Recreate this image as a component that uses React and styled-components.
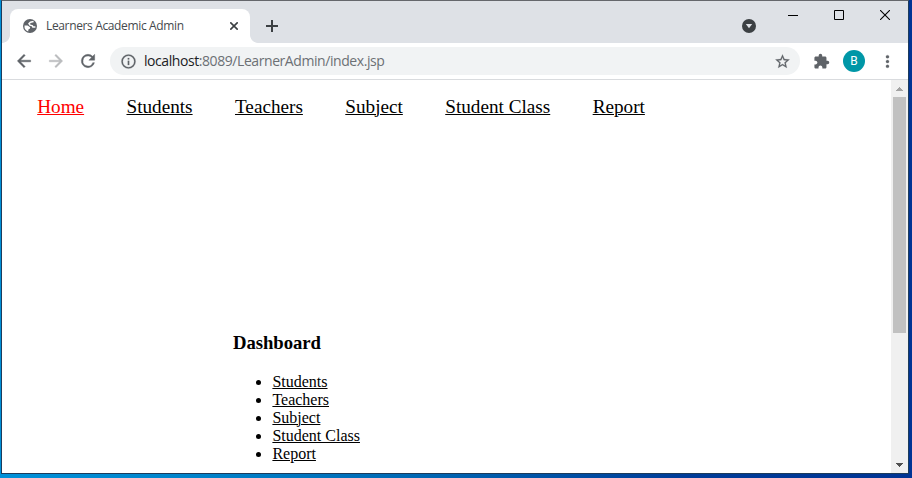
import React from "react";
import styled, { createGlobalStyle } from "styled-components";

const GlobalStyle = createGlobalStyle`
  *, *::before, *::after { box-sizing: border-box; }
  body { margin: 0; overflow: hidden; }
`;

const Desktop = styled.div`
  width: 912px;
  height: 478px;
  padding: 0 3px 4px 1px;
  background: linear-gradient(90deg, #0090d8 0%, #0084cc 20%, #0068b4 45%, #003c98 75%, #003494 100%);
`;

const Window = styled.div`
  height: 474px;
  display: flex;
  flex-direction: column;
  background: #fff;
  border: 1px solid #1d3c5c;
  border-top-color: #65676c;
`;

const TitleBar = styled.header`
  height: 42px;
  flex: none;
  display: flex;
  padding-left: 8px;
  background: #dee1e6;
`;

const Tab = styled.div`
  position: relative;
  width: 240px;
  height: 34px;
  margin-top: 8px;
  padding: 0 12px 0 13px;
  display: flex;
  align-items: center;
  background: #fff;
  border-radius: 8px 8px 0 0;

  &::before,
  &::after {
    content: "";
    position: absolute;
    bottom: 0;
    width: 8px;
    height: 8px;
  }
  &::before {
    left: -8px;
    background: radial-gradient(circle at 0 0, transparent 7.5px, #fff 8.2px);
  }
  &::after {
    right: -8px;
    background: radial-gradient(circle at 100% 0, transparent 7.5px, #fff 8.2px);
  }
`;

const TabTitle = styled.span`
  flex: 1;
  margin-left: 9px;
  white-space: nowrap;
  font: 12px/16px "Open Sans", sans-serif;
  letter-spacing: -0.36px;
  color: #45494d;
`;

const NewTab = styled.div`
  margin: 18px 0 0 15px;
  width: 14px;
  height: 14px;
  display: flex;
`;

const WindowControls = styled.div`
  margin-left: auto;
  display: flex;
  align-items: flex-start;
`;

const TabSearch = styled.div`
  margin: 18px 14px 0 0;
  height: 14px;
  display: flex;
`;

const Control = styled.div`
  width: 46px;
  height: 28px;
  display: flex;
  align-items: center;
  justify-content: center;
`;

const Toolbar = styled.div`
  height: 37px;
  flex: none;
  display: flex;
  align-items: center;
  padding: 0 11px 0 12px;
  border-bottom: 1px solid #d9dbde;
`;

const NavButton = styled.div`
  width: 20px;
  height: 20px;
  margin-right: 12px;
  display: flex;
  align-items: center;
  justify-content: center;

  svg {
    flex: none;
  }
`;

const AddressBar = styled.div`
  flex: none;
  width: 690px;
  height: 28px;
  display: flex;
  align-items: center;
  padding: 0 9.5px;
  border-radius: 14px;
  background: #f1f3f4;
`;

const Url = styled.span`
  flex: 1;
  margin-left: 7.5px;
  font: 14px/20px "Open Sans", sans-serif;
  letter-spacing: -0.43px;
  color: #6c7075;
  white-space: nowrap;
`;

const Host = styled.span`
  color: #202124;
`;

const ToolbarActions = styled.div`
  flex: 1;
  display: flex;
  align-items: center;
  padding-left: 13px;
`;

const Avatar = styled.div`
  width: 22px;
  height: 22px;
  margin: 0 12.5px 0 13px;
  border-radius: 50%;
  background: #0097a7;
  color: #fff;
  text-align: center;
  font: 12px/22px Roboto, sans-serif;
`;

const Viewport = styled.div`
  flex: 1;
  min-height: 0;
  display: flex;
`;

const Page = styled.main`
  flex: 1;
  overflow: hidden;
  font-family: "Liberation Serif", serif;
  color: #000;
`;

const MenuBar = styled.nav`
  display: flex;
  gap: 42.4px;
  padding: 16px 0 0 35.2px;
  font-size: 19.2px;
  line-height: 22px;
`;

const Link = styled.a`
  color: ${(p) => (p.$active ? "#f00" : "#000")};
  text-decoration: underline 1px;
  white-space: nowrap;
`;

const Dashboard = styled.section`
  margin: 214px 0 0 231px;
`;

const Heading = styled.h3`
  margin: 0;
  font-size: 18.72px;
  line-height: 21px;
  letter-spacing: -0.06px;
`;

const LinkList = styled.ul`
  margin: 20px 0 0;
  padding-left: 39.4px;
  font-size: 16px;
  line-height: 18px;
`;

const Scrollbar = styled.div`
  width: 17px;
  flex: none;
  display: flex;
  flex-direction: column;
  align-items: center;
  background: #f0f0f0;
`;

const ScrollArrow = styled.div`
  height: 17px;
  display: flex;
  align-items: center;
`;

const Thumb = styled.div`
  width: 13px;
  height: 236px;
  margin-bottom: auto;
  background: #c1c1c1;
`;

const GlobeIcon = () => (
  <svg width="14" height="14" viewBox="0 0 14 14">
    <circle cx="7" cy="7" r="7" fill="#5f6368" />
    <path d="M10.6 2.6 7.4 3.2 6 4.7 7 6.2 9.4 6.8 9.9 8.1 12.4 8.1" fill="none" stroke="#fff" strokeWidth="1.5" />
    <path d="M1.5 6.5H4.6L7.2 8.2 6.8 9.8 5.4 10.4 5.2 12.4A5.7 5.7 0 0 1 1.5 6.5Z" fill="#fff" />
  </svg>
);

const CloseTabIcon = () => (
  <svg width="8" height="8" viewBox="0 0 8 8" stroke="#3c4043" strokeWidth="1.6">
    <path d="M.3.3l7.4 7.4M7.7.3l-7.4 7.4" />
  </svg>
);

const PlusIcon = () => (
  <svg width="14" height="14" viewBox="0 0 14 14" stroke="#3c4043" strokeWidth="2">
    <path d="M7 1v12M1 7h12" />
  </svg>
);

const TabSearchIcon = () => (
  <svg width="14" height="14" viewBox="0 0 14 14">
    <circle cx="7" cy="7" r="7" fill="#3c4043" />
    <path d="M3.8 5h6.4L7 9.3z" fill="#dee1e6" />
  </svg>
);

const Minimize = () => (
  <svg width="10" height="10" viewBox="0 0 10 10"><path d="M0 5.5h10" stroke="#000" /></svg>
);
const Maximize = () => (
  <svg width="10" height="10" viewBox="0 0 10 10"><path d="M.5.5h9v9h-9z" stroke="#000" fill="none" /></svg>
);
const CloseWindow = () => (
  <svg width="10" height="10" viewBox="0 0 10 10"><path d="M0 0l10 10M10 0L0 10" stroke="#000" strokeWidth="1.1" /></svg>
);

const toolPaths = {
  back: "M20 11H7.83l5.59-5.59L12 4l-8 8 8 8 1.41-1.41L7.83 13H20v-2z",
  forward: "M12 4l-1.41 1.41L16.17 11H4v2h12.17l-5.58 5.59L12 20l8-8z",
  reload:
    "M17.65 6.35A7.958 7.958 0 0 0 12 4a8 8 0 1 0 7.73 10h-2.08A6 6 0 1 1 12 6c1.66 0 3.14.69 4.22 1.78L13 11h7V4l-2.35 2.35z",
  info: "M11 7h2v2h-2zm0 4h2v6h-2zm1-9a10 10 0 1 0 0 20 10 10 0 0 0 0-20zm0 18a8 8 0 1 1 0-16 8 8 0 0 1 0 16z",
  star: "M22 9.24l-7.19-.62L12 2 9.19 8.63 2 9.24l5.46 4.73L5.82 21 12 17.27 18.18 21l-1.63-7.03L22 9.24zM12 15.4l-3.76 2.27 1-4.28-3.32-2.88 4.38-.38L12 6.1l1.71 4.04 4.38.38-3.32 2.88 1 4.28L12 15.4z",
  puzzle:
    "M20.5 11H19V7c0-1.1-.9-2-2-2h-4V3.5a2.5 2.5 0 0 0-5 0V5H4c-1.1 0-1.99.9-1.99 2v3.8H3.5c1.49 0 2.7 1.21 2.7 2.7s-1.21 2.7-2.7 2.7H2V20c0 1.1.9 2 2 2h3.8v-1.5c0-1.49 1.21-2.7 2.7-2.7s2.7 1.21 2.7 2.7V22H17c1.1 0 2-.9 2-2v-4h1.5a2.5 2.5 0 0 0 0-5z",
  dots: "M12 8a2 2 0 1 0 0-4 2 2 0 0 0 0 4zm0 2a2 2 0 1 0 0 4 2 2 0 0 0 0-4zm0 6a2 2 0 1 0 0 4 2 2 0 0 0 0-4z",
};

const ToolIcon = ({ name, size = 17, color = "#5f6368", weight = 0.3 }) => (
  <svg width={size} height={size} viewBox="0 0 24 24" fill={color} stroke={color} strokeWidth={weight}>
    <path d={toolPaths[name]} />
  </svg>
);

const Arrow = ({ down }) => (
  <svg width="7" height="4" viewBox="0 0 7 4" shapeRendering="crispEdges">
    <path d={down ? "M0 0h7v1h-1v1h-1v1h-1v1h-1v-1h-1v-1h-1v-1h-1z" : "M3 0h1v1h1v1h1v1h1v1h-7v-1h1v-1h1v-1h1z"} fill={down ? "#505050" : "#a3a3a3"} />
  </svg>
);

const sections = ["Students", "Teachers", "Subject", "Student Class", "Report"];

export default function App() {
  return (
    <Desktop>
      <GlobalStyle />
      <Window>
        <TitleBar>
          <Tab>
            <GlobeIcon />
            <TabTitle>Learners Academic Admin</TabTitle>
            <CloseTabIcon />
          </Tab>
          <NewTab><PlusIcon /></NewTab>
          <WindowControls>
            <TabSearch><TabSearchIcon /></TabSearch>
            <Control><Minimize /></Control>
            <Control><Maximize /></Control>
            <Control><CloseWindow /></Control>
          </WindowControls>
        </TitleBar>
        <Toolbar>
          <NavButton><ToolIcon name="back" size={20} weight={0.5} /></NavButton>
          <NavButton><ToolIcon name="forward" size={20} color="#babcbe" weight={0.5} /></NavButton>
          <NavButton><ToolIcon name="reload" size={20} weight={0.5} /></NavButton>
          <AddressBar>
            <ToolIcon name="info" />
            <Url><Host>localhost</Host>:8089/LearnerAdmin/index.jsp</Url>
            <ToolIcon name="star" />
          </AddressBar>
          <ToolbarActions>
            <ToolIcon name="puzzle" weight={0} />
            <Avatar>B</Avatar>
            <ToolIcon name="dots" size={19} />
          </ToolbarActions>
        </Toolbar>
        <Viewport>
          <Page>
            <MenuBar>
              <Link $active>Home</Link>
              {sections.map((s) => <Link key={s}>{s}</Link>)}
            </MenuBar>
            <Dashboard>
              <Heading>Dashboard</Heading>
              <LinkList>
                {sections.map((s) => <li key={s}><Link>{s}</Link></li>)}
              </LinkList>
            </Dashboard>
          </Page>
          <Scrollbar>
            <ScrollArrow><Arrow /></ScrollArrow>
            <Thumb />
            <ScrollArrow><Arrow down /></ScrollArrow>
          </Scrollbar>
        </Viewport>
      </Window>
    </Desktop>
  );
}
